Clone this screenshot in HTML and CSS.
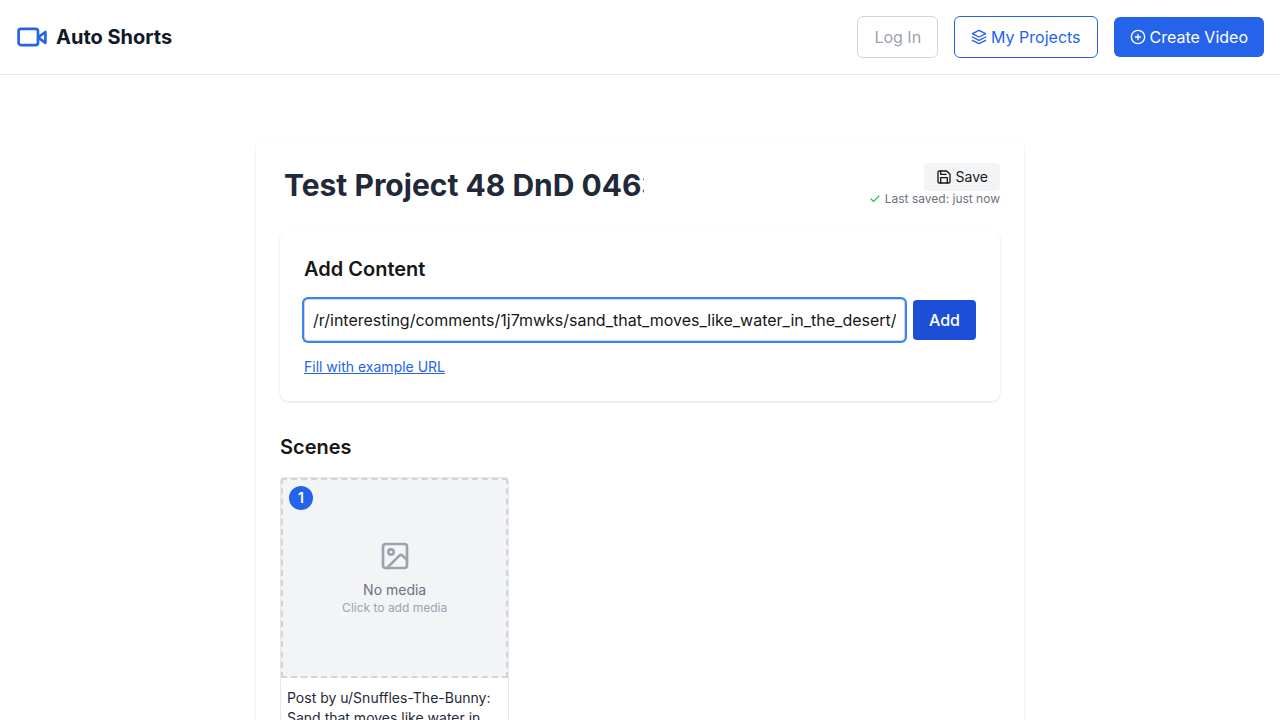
FILE: index.html
```html
<!DOCTYPE html>
<html lang="en">
<head>
  <meta charset="utf-8">
  <meta name="viewport" content="width=device-width, initial-scale=1">
  <title>Auto Shorts</title>
  <link rel="stylesheet" href="styles.css">
</head>
<body>
  <header class="site-header">
    <a class="brand" href="#">
      <svg class="brand-icon" viewBox="0 0 32 32" fill="none" stroke="currentColor" stroke-width="2.7" stroke-linecap="round" stroke-linejoin="round" aria-hidden="true">
        <rect x="2.6" y="7.9" width="19.4" height="16.2" rx="2.4"/>
        <path d="M29.4 11v10.8L22 16.4z"/>
      </svg>
      <span>Auto Shorts</span>
    </a>
    <nav class="site-nav">
      <button class="btn btn-muted" type="button">Log In</button>
      <a class="btn btn-outline" href="#">
        <svg class="icon" viewBox="0 0 24 24" fill="none" stroke="currentColor" stroke-width="2" stroke-linecap="round" stroke-linejoin="round" aria-hidden="true">
          <path d="M12 2 2 7l10 5 10-5zM2 17l10 5 10-5M2 12l10 5 10-5"/>
        </svg>
        My Projects
      </a>
      <a class="btn btn-primary" href="#">
        <svg class="icon" viewBox="0 0 24 24" fill="none" stroke="currentColor" stroke-width="2" stroke-linecap="round" stroke-linejoin="round" aria-hidden="true">
          <circle cx="12" cy="12" r="10"/>
          <path d="M12 8v8M8 12h8"/>
        </svg>
        Create Video
      </a>
    </nav>
  </header>

  <main class="page">
    <div class="editor">
      <div class="editor-head">
        <input class="title-input" type="text" aria-label="Project title" value="Test Project 48 DnD 0463">
        <div class="save-area">
          <button class="save-btn" type="button">
            <svg class="icon" viewBox="0 0 24 24" fill="none" stroke="currentColor" stroke-width="2" stroke-linecap="round" stroke-linejoin="round" aria-hidden="true">
              <path d="M19 21H5a2 2 0 0 1-2-2V5a2 2 0 0 1 2-2h11l5 5v11a2 2 0 0 1-2 2z"/>
              <path d="M17 21v-8H7v8M7 3v5h8"/>
            </svg>
            Save
          </button>
          <p class="save-status">
            <svg class="check" viewBox="0 0 24 24" fill="none" stroke="currentColor" stroke-width="2.4" stroke-linecap="round" stroke-linejoin="round" aria-hidden="true">
              <path d="M20 6 9 17l-5-5"/>
            </svg>
            Last saved: just now
          </p>
        </div>
      </div>

      <section class="add-content">
        <h2 class="section-title">Add Content</h2>
        <form class="add-form">
          <input class="url-input" type="text" aria-label="Content URL" value="/r/interesting/comments/1j7mwks/sand_that_moves_like_water_in_the_desert/">
          <button class="add-btn" type="button">Add</button>
        </form>
        <button class="example-link" type="button">Fill with example URL</button>
      </section>

      <section class="scenes">
        <h2 class="section-title">Scenes</h2>
        <div class="scene-grid">
          <article class="scene">
            <button class="scene-media" type="button">
              <svg class="media-icon" viewBox="0 0 24 24" fill="none" stroke="currentColor" stroke-width="2" stroke-linecap="round" stroke-linejoin="round" aria-hidden="true">
                <rect x="3" y="3" width="18" height="18" rx="2"/>
                <circle cx="9" cy="9" r="2"/>
                <path d="m21 15-3.086-3.086a2 2 0 0 0-2.828 0L6 21"/>
              </svg>
              <span class="media-label">No media</span>
              <span class="media-hint">Click to add media</span>
            </button>
            <span class="scene-number">1</span>
            <p class="scene-text">Post by u/Snuffles-The-Bunny: Sand that moves like water in</p>
          </article>
        </div>
      </section>
    </div>
  </main>
</body>
</html>
```
FILE: styles.css
```css
*,
*::before,
*::after {
  box-sizing: border-box;
}

body {
  margin: 0;
  background: #fff;
  color: #171717;
  font-family: Inter, "Liberation Sans", sans-serif;
  font-size: 16px;
  line-height: 24px;
}

h2,
p {
  margin: 0;
}

a {
  color: inherit;
  text-decoration: none;
}

button,
input {
  margin: 0;
  font: inherit;
  color: inherit;
}

button {
  cursor: pointer;
}

svg {
  display: block;
  flex: none;
}

.icon {
  width: 16px;
  height: 16px;
}

/* Header */
.site-header {
  display: flex;
  align-items: center;
  justify-content: space-between;
  padding: 16px;
  border-bottom: 1px solid #e5e7eb;
}

.brand {
  display: flex;
  align-items: center;
  gap: 8px;
  color: #111827;
  font-size: 20px;
  font-weight: 700;
  line-height: 28px;
}

.brand-icon {
  width: 32px;
  height: 32px;
  color: #2563eb;
}

.site-nav {
  display: flex;
  align-items: center;
  gap: 16px;
}

.btn {
  display: flex;
  align-items: center;
  gap: 4px;
  padding: 8px 16px;
  border: 0;
  border-radius: 6px;
  background: #fff;
}

.btn-muted {
  border: 1px solid #d1d5db;
  color: #9ca3af;
}

.btn-outline {
  border: 1px solid #2563eb;
  color: #2563eb;
}

.btn-primary {
  background: #2563eb;
  color: #fff;
}

/* Editor */
.page {
  padding: 64px 16px;
}

.editor {
  max-width: 768px;
  margin: 0 auto;
  padding: 24px;
  border-radius: 8px;
  box-shadow: 0 1px 3px rgba(0, 0, 0, 0.1), 0 1px 2px -1px rgba(0, 0, 0, 0.1);
}

.editor-head {
  display: flex;
  align-items: center;
  justify-content: space-between;
  margin-bottom: 24px;
}

.title-input {
  width: 368px;
  padding: 0 4px;
  border: 0;
  outline: 0;
  background: transparent;
  color: #1f2937;
  font-size: 30px;
  font-weight: 700;
  line-height: 36px;
}

.save-area {
  display: flex;
  flex-direction: column;
  align-items: flex-end;
}

.save-btn {
  display: flex;
  align-items: center;
  gap: 4px;
  padding: 4px 12px;
  border: 0;
  border-radius: 4px;
  background: #f3f4f6;
  font-size: 14px;
  line-height: 20px;
}

.save-status {
  display: flex;
  align-items: center;
  gap: 4px;
  color: #6b7280;
  font-size: 12px;
  line-height: 16px;
}

.check {
  width: 12px;
  height: 12px;
  color: #22c55e;
}

.section-title {
  margin-bottom: 16px;
  font-size: 20px;
  font-weight: 600;
  line-height: 28px;
}

.add-content {
  padding: 24px;
  border-radius: 8px;
  box-shadow: 0 1px 3px rgba(0, 0, 0, 0.1), 0 1px 2px -1px rgba(0, 0, 0, 0.1);
}

.add-form {
  display: flex;
  align-items: center;
  gap: 8px;
  margin-bottom: 16px;
}

.url-input {
  flex: 1;
  min-width: 0;
  height: 42px;
  padding: 8px;
  border: 1px solid #d1d5db;
  border-radius: 4px;
  outline: 0;
  background: #fff;
  box-shadow: 0 0 0 2px #3b82f6;
}

.add-btn {
  padding: 8px 16px;
  border: 0;
  border-radius: 4px;
  background: #1d4ed8;
  color: #fff;
  font-weight: 500;
}

.example-link {
  display: block;
  padding: 0;
  border: 0;
  background: none;
  color: #2563eb;
  font-size: 14px;
  line-height: 20px;
  text-decoration: underline;
}

/* Scenes */
.scenes {
  margin-top: 32px;
}

.scene-grid {
  display: grid;
  grid-template-columns: repeat(3, 1fr);
  gap: 16px;
}

.scene {
  position: relative;
  overflow: hidden;
  border: 1px solid #e5e7eb;
  border-radius: 4px;
}

.scene-media {
  display: flex;
  flex-direction: column;
  align-items: center;
  justify-content: center;
  width: 100%;
  height: 200px;
  padding: 0;
  border: 2px dashed #d1d5db;
  background: #f3f4f6;
}

.media-icon {
  width: 32px;
  height: 32px;
  margin-bottom: 8px;
  color: #9ca3af;
}

.media-label {
  color: #6b7280;
  font-size: 14px;
  line-height: 20px;
}

.media-hint {
  color: #9ca3af;
  font-size: 12px;
  line-height: 16px;
}

.scene-number {
  position: absolute;
  top: 8px;
  left: 8px;
  width: 24px;
  height: 24px;
  border-radius: 50%;
  background: #2563eb;
  color: #fff;
  font-size: 14px;
  font-weight: 600;
  text-align: center;
}

.scene-text {
  padding: 10px 6px;
  color: #1f2937;
  font-size: 14px;
  line-height: 20px;
}
```
